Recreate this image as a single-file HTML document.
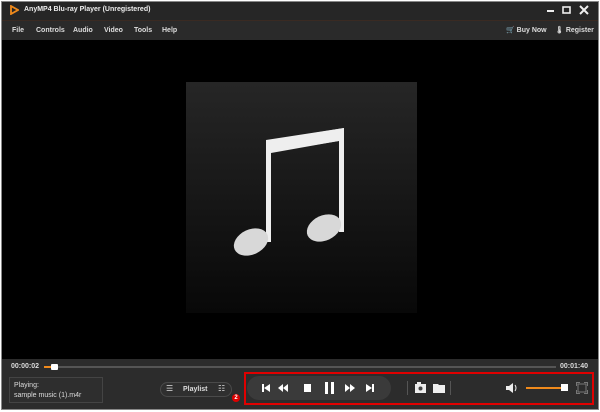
<!DOCTYPE html><html><head><style>
*{margin:0;padding:0;box-sizing:border-box}
body{width:600px;height:412px;background:#fff;position:relative;overflow:hidden;font-family:"Liberation Sans",sans-serif;font-size:7px;color:#ddd}
.a{position:absolute}
</style></head><body>
<div class="a" style="left:1px;top:1px;width:598px;height:409px;background:#2c2c2c;border:1px solid #888"></div>
<div class="a" style="left:2px;top:2px;width:596px;height:18px;background:#262626"></div>
<svg class="a" style="left:10px;top:5px" width="9" height="10"><path d="M1 1 L8 5 L1 9 Z" fill="none" stroke="#f08a1c" stroke-width="1.8"/></svg>
<div class="a" style="left:24px;top:6px;font-weight:bold;color:#eee">AnyMP4 Blu-ray Player (Unregistered)</div>
<svg class="a" style="left:545px;top:4px" width="50" height="12" stroke="#eee" fill="none" stroke-width="2"><path d="M2 7H9"/><rect x="18" y="3" width="7" height="6" stroke-width="1.6"/><path d="M35 2L43 10M43 2L35 10"/></svg>
<div class="a" style="left:2px;top:20px;width:596px;height:20px;background:#2a2a2a;border-top:1px solid #3a2a22"></div>
<div class="a" style="left:12px;top:27px;font-weight:bold">File</div>
<div class="a" style="left:36px;top:27px;font-weight:bold">Controls</div>
<div class="a" style="left:73px;top:27px;font-weight:bold">Audio</div>
<div class="a" style="left:104px;top:27px;font-weight:bold">Video</div>
<div class="a" style="left:134px;top:27px;font-weight:bold">Tools</div>
<div class="a" style="left:162px;top:27px;font-weight:bold">Help</div>
<div class="a" style="left:506px;top:26px;font-weight:bold">🛒 Buy Now</div>
<div class="a" style="left:555px;top:26px;font-weight:bold">🌡 Register</div>
<div class="a" style="left:2px;top:40px;width:596px;height:319px;background:#000"></div>
<svg class="a" style="left:186px;top:82px" width="231" height="231"><defs><linearGradient id="g" x1="0" y1="0" x2="0" y2="1"><stop offset="0" stop-color="#262626"/><stop offset="1" stop-color="#080808"/></linearGradient></defs>
<rect width="231" height="231" fill="url(#g)"/>
<g fill="#d8d8d8"><path d="M80 58 L158 46 L158 150 L153 150 L153 59 L85 70 L85 160 L80 160 Z" fill="#eee"/><path d="M85 58 L158 46 L158 58 L85 71Z" fill="#eee"/>
<ellipse cx="65" cy="160" rx="18" ry="12.5" transform="rotate(-25 65 160)"/><ellipse cx="138" cy="146" rx="18" ry="12.5" transform="rotate(-25 138 146)"/></g></svg>
<div class="a" style="left:11px;top:363px;font-weight:bold;color:#ddd">00:00:02</div>
<div class="a" style="left:44px;top:366px;width:512px;height:2px;background:#555"></div>
<div class="a" style="left:44px;top:366px;width:8px;height:2px;background:#f08a1c"></div>
<div class="a" style="left:51px;top:364px;width:7px;height:6px;background:#fff;border-radius:1px"></div>
<div class="a" style="left:560px;top:363px;font-weight:bold">00:01:40</div>
<div class="a" style="left:9px;top:377px;width:94px;height:26px;border:1px solid #444;background:#2e2e2e;padding:3px 4px;line-height:10px;color:#ddd">Playing:<br>sample music (1).m4r</div>
<div class="a" style="left:160px;top:382px;width:72px;height:15px;border:1px solid #4a4a4a;border-radius:8px;background:#2f2f2f"></div>
<div class="a" style="left:166px;top:384px;font-size:8px">☰</div>
<div class="a" style="left:183px;top:386px;font-weight:bold">Playlist</div>
<div class="a" style="left:218px;top:384px;font-size:8px">☷</div>
<div class="a" style="left:232px;top:394px;width:8px;height:8px;border-radius:50%;background:#d00;color:#fff;font-size:6px;text-align:center;line-height:8px;font-weight:bold">2</div>
<div class="a" style="left:244px;top:372px;width:350px;height:33px;border:2px solid #e00000"></div>
<div class="a" style="left:247px;top:376px;width:144px;height:24px;border-radius:12px;background:#3a3a3a"></div>
<svg class="a" style="left:247px;top:376px" width="144" height="24" fill="#fff">
<rect x="15" y="8" width="2" height="8"/><path d="M23 8 L17 12 L23 16Z"/>
<path d="M36 8 L31 12 L36 16Z M41 8 L36 12 L41 16Z"/>
<rect x="57" y="8" width="7" height="8"/>
<rect x="78" y="6" width="3" height="12"/><rect x="84" y="6" width="3" height="12"/>
<path d="M98 8 L103 12 L98 16Z M103 8 L108 12 L103 16Z"/>
<path d="M119 8 L125 12 L119 16Z"/><rect x="125" y="8" width="2" height="8"/></svg>
<div class="a" style="left:407px;top:381px;width:1px;height:14px;background:#555"></div>
<div class="a" style="left:450px;top:381px;width:1px;height:14px;background:#555"></div>
<svg class="a" style="left:414px;top:381px" width="32" height="14"><rect x="1" y="3" width="11" height="9" fill="#eee"/><rect x="3" y="1" width="4" height="3" fill="#eee"/><circle cx="6.5" cy="7.5" r="2" fill="#444"/><path d="M19 3 H24 L25 4 H31 V12 H19Z" fill="#eee"/></svg>
<svg class="a" style="left:505px;top:382px" width="14" height="12"><path d="M1 4 H4 L8 1 V11 L4 8 H1Z" fill="#eee"/><path d="M10 3 Q12 6 10 9" stroke="#eee" fill="none"/></svg>
<div class="a" style="left:526px;top:387px;width:38px;height:2px;background:#f08a1c"></div>
<div class="a" style="left:561px;top:384px;width:7px;height:7px;background:#fff"></div>
<svg class="a" style="left:576px;top:382px" width="12" height="12"><rect x="2" y="2" width="8" height="8" fill="none" stroke="#777"/><path d="M0 0h4v1H1v3H0z M12 0H8v1h3v3h1z M0 12h4v-1H1V8H0z M12 12H8v-1h3V8h1z" fill="#777"/></svg>
</body></html>
